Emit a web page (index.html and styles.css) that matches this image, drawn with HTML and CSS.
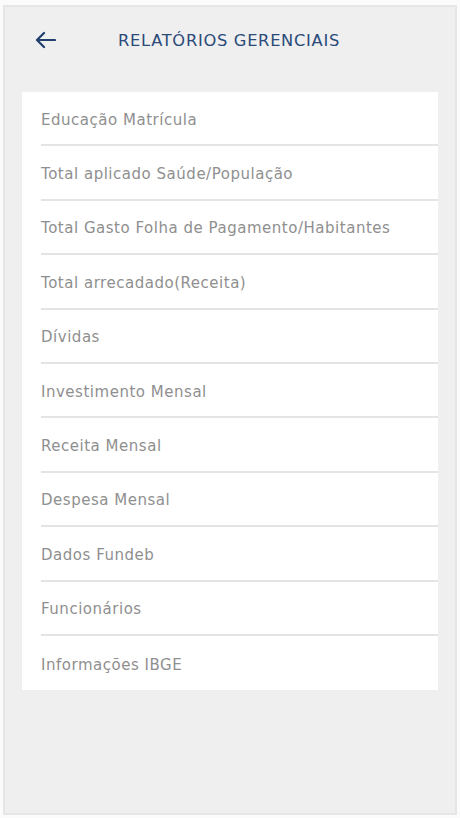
FILE: index.html
```html
<!DOCTYPE html>
<html lang="pt-BR">
<head>
<meta charset="utf-8">
<link rel="stylesheet" href="styles.css">
</head>
<body>
<div class="screen">
  <header class="topbar">
    <button class="back" aria-label="Voltar">
      <svg width="22" height="18" viewBox="0 0 22 18"><path d="M21 9H3M10 2L3 9l7 7" fill="none" stroke="#1f3f6e" stroke-width="2.2" stroke-linecap="round" stroke-linejoin="round"/></svg>
    </button>
    <h1 class="title">RELATÓRIOS GERENCIAIS</h1>
  </header>
  <ul class="list">
    <li class="item">Educação Matrícula</li>
    <li class="item">Total aplicado Saúde/População</li>
    <li class="item">Total Gasto Folha de Pagamento/Habitantes</li>
    <li class="item">Total arrecadado(Receita)</li>
    <li class="item">Dívidas</li>
    <li class="item">Investimento Mensal</li>
    <li class="item">Receita Mensal</li>
    <li class="item">Despesa Mensal</li>
    <li class="item">Dados Fundeb</li>
    <li class="item">Funcionários</li>
    <li class="item">Informações IBGE</li>
  </ul>
</div>
</body>
</html>
```
FILE: styles.css
```css
* { box-sizing: border-box; }
html, body { margin: 0; padding: 0; background: #fbfbfb; }
body { width: 460px; height: 818px; padding: 5px 3px 3px 3px; font-family: "DejaVu Sans", "Open Sans", sans-serif; }
.screen {
  height: 810px;
  background: #efefef;
  border: 2px solid #e6e6e6;
  padding: 0 17px;
}
.topbar {
  height: 85px;
  display: flex;
  align-items: center;
  padding-bottom: 19px;
}
.back {
  border: 0; background: none; padding: 0;
  margin-left: 12px;
  width: 22px; height: 18px;
  display: flex;
}
.title {
  margin: 0 0 0 62px;
  font-weight: 400;
  font-size: 16.3px;
  color: #2b4a78;
  letter-spacing: 0.7px;
}
.list {
  list-style: none;
  margin: 0;
  padding: 0;
  background: #fff;
}
.item {
  height: 54.4px;
  display: flex;
  align-items: center;
  margin-left: 19px;
  padding-top: 3px;
  border-bottom: 2px solid #e4e4e4;
  font-size: 15px;
  letter-spacing: 0.52px;
  color: #8f8f8f;
}
.item:last-child { border-bottom: 0; }
```
